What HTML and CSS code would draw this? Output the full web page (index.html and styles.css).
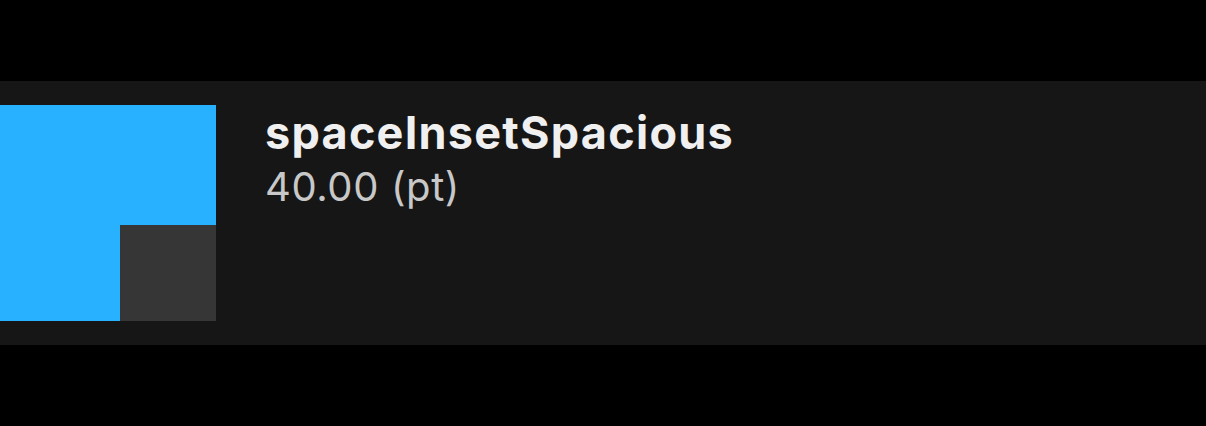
FILE: index.html
```html
<!DOCTYPE html>
<html>
<head>
<meta charset="utf-8">
<link rel="stylesheet" href="styles.css">
</head>
<body>
<div class="page">
  <div class="row">
    <div class="swatch"><div class="inset"></div></div>
    <div class="info">
      <div class="name">spaceInsetSpacious</div>
      <div class="value">40.00 (pt)</div>
    </div>
  </div>
</div>
</body>
</html>
```
FILE: styles.css
```css
html, body {
  margin: 0;
  padding: 0;
  background: #000;
}
.page {
  padding-top: 81px;
  height: 426px;
  box-sizing: border-box;
}
.row {
  background: #161616;
  height: 264px;
  box-sizing: border-box;
  padding: 24px 0;
  display: flex;
  gap: 49px;
  align-items: flex-start;
}
.swatch {
  width: 216px;
  height: 216px;
  background: #27b1ff;
  display: flex;
  justify-content: flex-end;
  align-items: flex-end;
  flex: none;
}
.inset {
  width: 96px;
  height: 96px;
  background: #363636;
}
.info {
  font-family: Inter, "Noto Sans", sans-serif;
  display: flex;
  flex-direction: column;
  padding-top: 3px;
}
.name {
  font-size: 45px;
  font-weight: 700;
  color: #f0f0f0;
  line-height: 50px;
  letter-spacing: 1.25px;
}
.value {
  font-size: 40px;
  font-weight: 400;
  color: #c8c8c8;
  line-height: 48px;
  margin-top: 5px;
  letter-spacing: 0.6px;
}
```
